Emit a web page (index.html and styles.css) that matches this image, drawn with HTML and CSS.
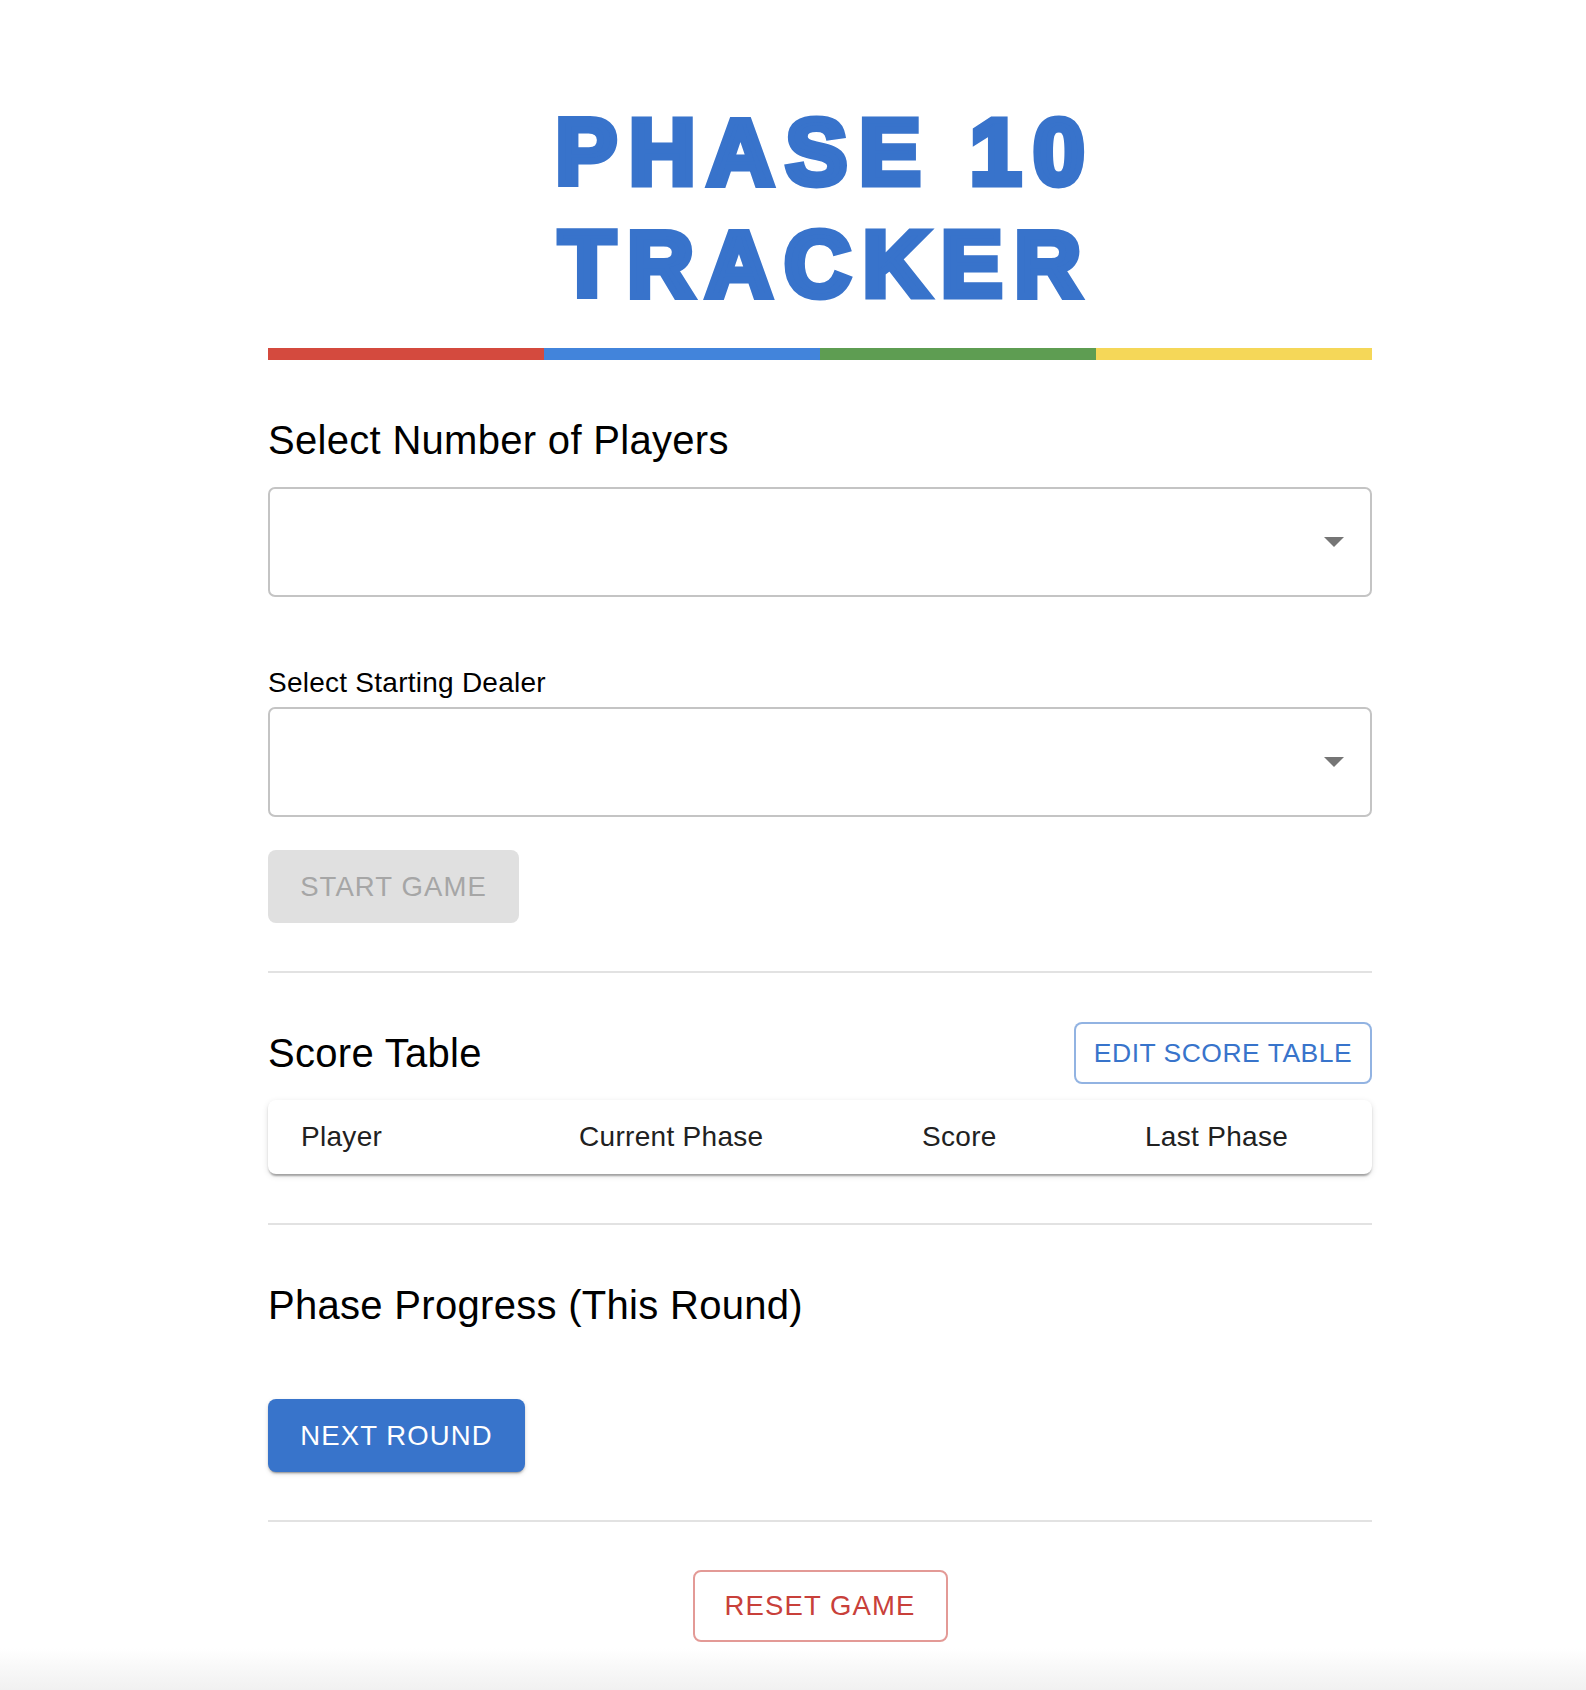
FILE: index.html
```html
<!DOCTYPE html>
<html lang="en">
<head>
<meta charset="utf-8">
<title>Phase 10 Tracker</title>
<link rel="stylesheet" href="styles.css">
</head>
<body>
<main class="container">
  <h1 class="title">PHASE 10<br>TRACKER</h1>
  <div class="color-bar">
    <span class="seg seg-red"></span>
    <span class="seg seg-blue"></span>
    <span class="seg seg-green"></span>
    <span class="seg seg-yellow"></span>
  </div>

  <h2 class="heading heading-first">Select Number of Players</h2>
  <div class="select select-first">
    <svg class="arrow" width="20" height="10" viewBox="0 0 20 10"><path d="M0 0 L20 0 L10 10 Z" fill="#757575"/></svg>
  </div>

  <div class="field-label">Select Starting Dealer</div>
  <div class="select select-second">
    <svg class="arrow" width="20" height="10" viewBox="0 0 20 10"><path d="M0 0 L20 0 L10 10 Z" fill="#757575"/></svg>
  </div>

  <button class="btn btn-disabled" disabled>START GAME</button>

  <hr class="divider divider-1">

  <div class="section-head">
    <h2 class="heading">Score Table</h2>
    <button class="btn btn-outline-primary">EDIT SCORE TABLE</button>
  </div>

  <div class="table-card">
    <div class="th">Player</div>
    <div class="th">Current Phase</div>
    <div class="th">Score</div>
    <div class="th">Last Phase</div>
  </div>

  <hr class="divider divider-2">

  <h2 class="heading heading-progress">Phase Progress (This Round)</h2>

  <button class="btn btn-primary">NEXT ROUND</button>

  <hr class="divider divider-3">

  <div class="reset-row">
    <button class="btn btn-outline-danger">RESET GAME</button>
  </div>
</main>
</body>
</html>
```

FILE: styles.css
```css
html, body {
  margin: 0;
  padding: 0;
}

body {
  min-height: 1690px;
  background: linear-gradient(to bottom, #ffffff 0, #ffffff 1648px, #f1f1f1 1690px);
  font-family: "Liberation Sans", Arial, Helvetica, sans-serif;
  color: #000;
}

.container {
  width: 1104px;
  margin: 0 0 0 268px;
  padding-top: 96px;
  display: flex;
  flex-direction: column;
  align-items: flex-start;
}

.title {
  align-self: stretch;
  margin: 0;
  text-align: center;
  font-family: "Liberation Sans", Arial, sans-serif;
  font-weight: 700;
  font-size: 92px;
  line-height: 112px;
  letter-spacing: 12px;
  padding-left: 12px;
  color: #3873cb;
  -webkit-text-stroke: 7px #3873cb;
}

.color-bar {
  align-self: stretch;
  margin-top: 28px;
  height: 12px;
  display: flex;
}

.seg {
  flex: 1;
}
.seg-red { background: #d44a3e; }
.seg-blue { background: #4284db; }
.seg-green { background: #5e9d52; }
.seg-yellow { background: #f5d758; }

.heading {
  margin: 0;
  font-size: 40px;
  line-height: 48px;
  font-weight: 400;
  letter-spacing: 0.3px;
  color: #000;
}

.heading-first {
  margin-top: 56px;
}

.select {
  align-self: stretch;
  box-sizing: border-box;
  height: 110px;
  border: 2px solid #c4c4c4;
  border-radius: 7px;
  display: flex;
  align-items: center;
  justify-content: flex-end;
  padding-right: 26px;
  background: #fff;
}

.select-first {
  margin-top: 23px;
}

.field-label {
  margin-top: 69px;
  font-size: 28px;
  line-height: 34px;
  letter-spacing: 0.25px;
  color: #000;
}

.select-second {
  margin-top: 7px;
}

.arrow {
  display: block;
}

.btn {
  box-sizing: border-box;
  display: inline-flex;
  align-items: center;
  justify-content: center;
  font-family: "Liberation Sans", Arial, sans-serif;
  font-size: 27.5px;
  line-height: 1;
  letter-spacing: 1.1px;
  border-radius: 8px;
  cursor: pointer;
  white-space: nowrap;
}

.btn-disabled {
  margin-top: 33px;
  height: 73px;
  width: 251px;
  padding: 0;
  border: 0;
  background: #e0e0e0;
  color: #a6a6a6;
}

.divider {
  align-self: stretch;
  border: 0;
  height: 2px;
  background: #e2e2e2;
  margin: 0;
}

.divider-1 { margin-top: 48px; }
.divider-2 { margin-top: 49px; }
.divider-3 { margin-top: 48px; }

.section-head {
  align-self: stretch;
  margin-top: 49px;
  display: flex;
  align-items: center;
  justify-content: space-between;
}

.btn-outline-primary {
  height: 62px;
  width: 298px;
  padding: 0;
  background: #fff;
  border: 2px solid rgba(56, 116, 203, 0.55);
  color: #3874cb;
  font-size: 26.5px;
  letter-spacing: 0.5px;
}

.table-card {
  align-self: stretch;
  margin-top: 16px;
  height: 74px;
  box-sizing: border-box;
  display: grid;
  grid-template-columns: 278px 343px 223px 260px;
  align-items: center;
  background: #fff;
  border-radius: 8px;
  box-shadow: 0 4px 2px -2px rgba(0, 0, 0, 0.2), 0 2px 2px 0 rgba(0, 0, 0, 0.14), 0 2px 6px 0 rgba(0, 0, 0, 0.12);
}

.th {
  padding-left: 33px;
  font-size: 28px;
  letter-spacing: 0.3px;
  color: #212121;
}

.heading-progress {
  margin-top: 56px;
}

.btn-primary {
  margin-top: 70px;
  height: 73px;
  width: 257px;
  padding: 0;
  border: 0;
  background: #3874cb;
  color: #fff;
  box-shadow: 0 3px 1px -2px rgba(0, 0, 0, 0.2), 0 2px 2px 0 rgba(0, 0, 0, 0.14), 0 2px 5px 0 rgba(0, 0, 0, 0.12);
}

.reset-row {
  align-self: stretch;
  margin-top: 48px;
  display: flex;
  justify-content: center;
}

.btn-outline-danger {
  height: 72px;
  width: 255px;
  padding: 0;
  background: #fff;
  border: 2px solid #e39a96;
  color: #c8403a;
}
```
